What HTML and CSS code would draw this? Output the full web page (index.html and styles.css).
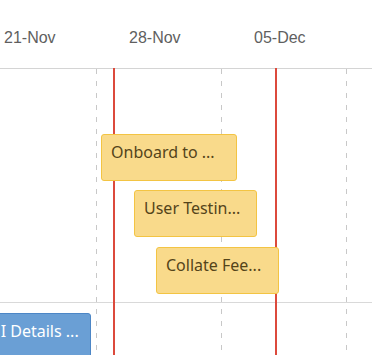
FILE: index.html
```html
<!DOCTYPE html>
<html lang="en">
<head>
  <meta charset="UTF-8" />
  <title>Timeline</title>
  <link rel="stylesheet" href="styles.css">
</head>
<body>
  <div class="timeline">
    <div class="axis">
      <span class="axis-label" style="left: 4px">21-Nov</span>
      <span class="axis-label" style="left: 129px">28-Nov</span>
      <span class="axis-label" style="left: 254px">05-Dec</span>
    </div>

    <div class="rows">
      <div class="row row-tall">
        <div class="bar bar-yellow" style="left: 101px; top: 65px; width: 136px">Onboard to ...</div>
        <div class="bar bar-yellow" style="left: 134px; top: 121px; width: 123px">User Testin...</div>
        <div class="bar bar-yellow" style="left: 156px; top: 178px; width: 123px">Collate Fee...</div>
      </div>
      <div class="row">
        <div class="bar bar-blue" style="left: -21px; top: 10px; width: 112px">UI Details ...</div>
      </div>
    </div>

    <div class="gridline" style="left: 96px"></div>
    <div class="gridline" style="left: 221px"></div>
    <div class="gridline" style="left: 346px"></div>
    <div class="marker" style="left: 113px"></div>
    <div class="marker" style="left: 275px"></div>
  </div>
</body>
</html>
```

FILE: styles.css
```css
body {
  margin: 0;
  background: #fff;
  font-family: 'Liberation Sans', Arial, sans-serif;
  overflow: hidden;
}

.timeline {
  position: relative;
  width: 372px;
  height: 355px;
  overflow: hidden;
}

.axis {
  position: relative;
  height: 68px;
  border-bottom: 1px solid #d4d4d4;
}

.axis-label {
  position: absolute;
  top: 29px;
  font-size: 16px;
  color: #5f5f5f;
}

.row {
  position: relative;
  height: 60px;
}

.row-tall {
  height: 233px;
  border-bottom: 1px solid #d9d9d9;
}

.gridline {
  position: absolute;
  top: 69px;
  bottom: 0;
  width: 1px;
  background: repeating-linear-gradient(to bottom, #c8c8c8 0 5px, transparent 5px 12px);
}

.marker {
  position: absolute;
  top: 68px;
  bottom: 0;
  width: 2px;
  background: #dc4a3c;
}

.bar {
  position: absolute;
  box-sizing: border-box;
  height: 47px;
  padding: 6px 9px;
  border-radius: 3px;
  font-family: 'Noto Sans', 'Open Sans', sans-serif;
  font-size: 16px;
  white-space: nowrap;
  overflow: hidden;
  z-index: 1;
}

.bar-yellow {
  background: #f9da8b;
  border: 1px solid #f3c443;
  color: #54441a;
}

.bar-blue {
  background: #6a9fd5;
  border: 1px solid #4c86c6;
  color: #fff;
  height: 50px;
}
```
